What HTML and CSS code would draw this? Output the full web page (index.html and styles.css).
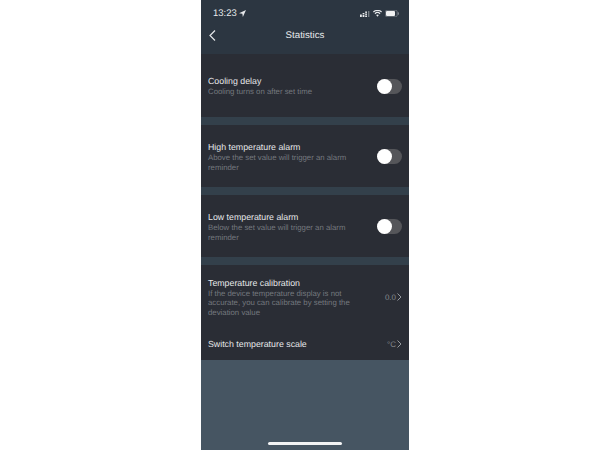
FILE: index.html
```html
<!DOCTYPE html>
<html lang="en">
<head>
  <meta charset="UTF-8">
  <title>Statistics</title>
  <link rel="stylesheet" href="styles.css">
</head>
<body>
  <div class="phone">
    <!-- Status bar and title -->
    <div class="header">
      <div class="status">
        <span class="hora">13:23
          <svg class="ubicacion" width="7" height="7" viewBox="0 0 10 10"><path d="M10 0 L0 4.5 L4.8 5.2 L5.500 10 Z" fill="#e8eaec"/></svg>
        </span>
        <span class="status-iconos">
          <svg width="10" height="6" viewBox="0 0 10 6"><g fill="#e8eaec"><rect x="0" y="3.500" width="1.800" height="2.500"/><rect x="2.600" y="2" width="1.800" height="1.400"/><rect x="2.600" y="4" width="1.800" height="2"/><rect x="5.200" y="0.500" width="1.800" height="1.400"/><rect x="5.200" y="2.500" width="1.800" height="1.400"/><rect x="5.200" y="4.500" width="1.800" height="1.500"/><rect x="8" y="0" width="1.400" height="6" opacity="0.4"/></g></svg>
          <svg width="9" height="7" viewBox="0 0 10 7"><path d="M5 7 L3.500 5.200 A2.300 2.300 0 0 1 6.500 5.200 Z M2.600 4.200 L1.700 3.200 A4.800 4.800 0 0 1 8.300 3.200 L7.400 4.200 A3.500 3.500 0 0 0 2.600 4.200 Z M0.900 2.300 L0 1.400 A7.200 7.200 0 0 1 10 1.400 L9.100 2.300 A6 6 0 0 0 0.900 2.300 Z" fill="#e8eaec"/></svg>
          <svg width="14" height="7" viewBox="0 0 14 7"><rect x="0.300" y="0.300" width="11.900" height="6.400" rx="1.600" fill="none" stroke="#8d949b" stroke-width="0.600"/><rect x="1" y="1" width="9" height="5" rx="1" fill="#f0f1f2"/><rect x="12.800" y="2.300" width="1" height="2.400" rx="0.500" fill="#8d949b"/></svg>
        </span>
      </div>
      <div class="titulo">
        <svg class="atras" width="7" height="11" viewBox="0 0 7 11"><path d="M6 0.500 L1 5.500 L6 10.500" fill="none" stroke="#e4e6e8" stroke-width="1.200"/></svg>
        <span>Statistics</span>
      </div>
    </div>

    <div class="lista">
      <div class="seccion uno">
        <div class="fila">
          <div class="textos">
            <div class="nombre">Cooling delay</div>
            <div class="detalle">Cooling turns on after set time</div>
          </div>
          <div class="interruptor"></div>
        </div>
      </div>

      <div class="seccion">
        <div class="fila">
          <div class="textos">
            <div class="nombre">High temperature alarm</div>
            <div class="detalle">Above the set value will trigger an alarm reminder</div>
          </div>
          <div class="interruptor"></div>
        </div>
      </div>

      <div class="seccion">
        <div class="fila">
          <div class="textos">
            <div class="nombre">Low temperature alarm</div>
            <div class="detalle">Below the set value will trigger an alarm reminder</div>
          </div>
          <div class="interruptor"></div>
        </div>
      </div>

      <div class="seccion">
        <div class="fila calibracion">
          <div class="textos">
            <div class="nombre">Temperature calibration</div>
            <div class="detalle">If the device temperature display is not accurate, you can calibrate by setting the deviation value</div>
          </div>
          <div class="valor">0.0
            <svg width="5" height="8" viewBox="0 0 5 8"><path d="M0.500 0.500 L4 4 L0.500 7.500" fill="none" stroke="#a3a7ab" stroke-width="0.900"/></svg>
          </div>
        </div>
        <div class="fila escala">
          <div class="nombre">Switch temperature scale</div>
          <div class="valor">°C
            <svg width="5" height="8" viewBox="0 0 5 8"><path d="M0.500 0.500 L4 4 L0.500 7.500" fill="none" stroke="#a3a7ab" stroke-width="0.900"/></svg>
          </div>
        </div>
      </div>
    </div>

    <div class="barra-inicio"></div>
  </div>
</body>
</html>
```

FILE: styles.css
```css
/* General */
body, html {
  margin: 0;
  padding: 0;
  height: 100%;
  overflow: hidden;
  background-color: #fff;
  font-family: "Liberation Sans", Arial, sans-serif;
  text-rendering: geometricPrecision;
}

.phone {
  width: 208px;
  height: 450px;
  margin-left: 201px;
  background-color: #465562;
  position: relative;
}

/* Header */
.header {
  height: 54px;
  background-color: #2c3641;
  color: #e8eaec;
}

.status {
  height: 27px;
  padding: 0 10px 0 12px;
  display: flex;
  justify-content: space-between;
  align-items: center;
  box-sizing: border-box;
}

.hora {
  font-size: 9.5px;
  display: flex;
  align-items: center;
  gap: 2px;
}

.status-iconos {
  display: flex;
  align-items: center;
  gap: 3px;
}

.titulo {
  height: 17px;
  position: relative;
  display: flex;
  justify-content: center;
  align-items: center;
  font-size: 9.7px;
}

.atras {
  position: absolute;
  left: 8px;
  top: 3px;
}

/* Sections */
.lista {
  background-color: #33404b;
  display: flex;
  flex-direction: column;
  gap: 8px;
}

.seccion {
  background-color: #2a2d35;
}

.fila {
  height: 62px;
  padding: 1px 7px 0;
  display: flex;
  justify-content: space-between;
  align-items: center;
  box-sizing: border-box;
}

.uno .fila {
  height: 63px;
}

.textos {
  width: 150px;
}

.nombre {
  font-size: 8.8px;
  line-height: 12px;
  color: #e6e7e9;
}

.detalle {
  font-size: 7.8px;
  line-height: 9.5px;
  color: #74787e;
}

.interruptor {
  width: 25px;
  height: 15px;
  border-radius: 8px;
  background-color: #55565a;
  position: relative;
}

.interruptor::before {
  content: "";
  position: absolute;
  left: 0;
  top: 0;
  width: 15px;
  height: 15px;
  border-radius: 50%;
  background-color: #fff;
}

.fila.calibracion {
  height: 60px;
  padding-top: 4px;
}

.fila.escala {
  height: 35px;
  padding-top: 3px;
}

.valor {
  font-size: 8px;
  color: #85888d;
  display: flex;
  align-items: center;
  gap: 1px;
}

/* Home indicator */
.barra-inicio {
  position: absolute;
  left: 67px;
  bottom: 5px;
  width: 74px;
  height: 3px;
  border-radius: 2px;
  background-color: #f2f3f4;
}
```
